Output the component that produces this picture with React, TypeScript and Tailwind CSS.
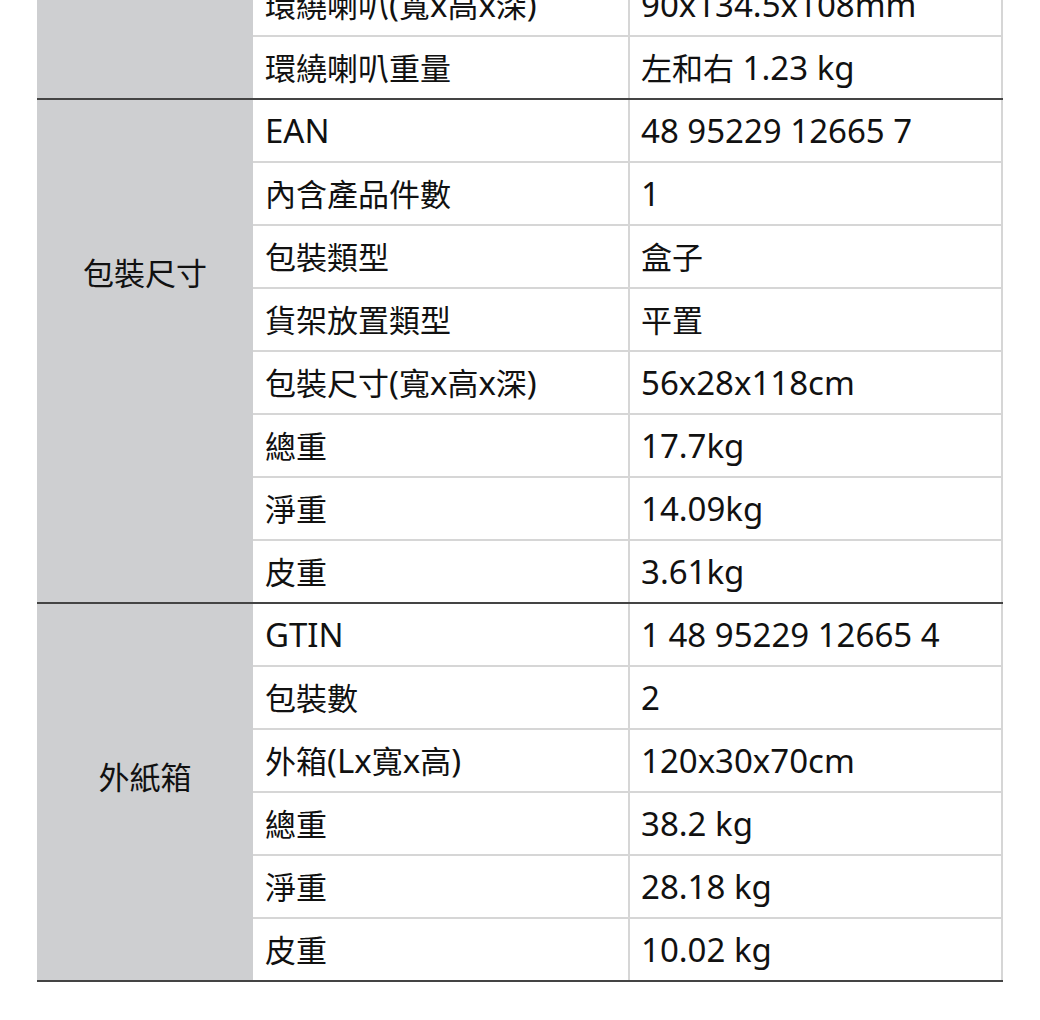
import React from 'react';

type Section = {
  label?: string;
  rows: [string, string][];
};

const sections: Section[] = [
  {
    rows: [
      ['環繞喇叭(寬x高x深)', '90x134.5x108mm'],
      ['環繞喇叭重量', '左和右 1.23 kg'],
    ],
  },
  {
    label: '包裝尺寸',
    rows: [
      ['EAN', '48 95229 12665 7'],
      ['內含產品件數', '1'],
      ['包裝類型', '盒子'],
      ['貨架放置類型', '平置'],
      ['包裝尺寸(寬x高x深)', '56x28x118cm'],
      ['總重', '17.7kg'],
      ['淨重', '14.09kg'],
      ['皮重', '3.61kg'],
    ],
  },
  {
    label: '外紙箱',
    rows: [
      ['GTIN', '1 48 95229 12665 4'],
      ['包裝數', '2'],
      ['外箱(Lx寬x高)', '120x30x70cm'],
      ['總重', '38.2 kg'],
      ['淨重', '28.18 kg'],
      ['皮重', '10.02 kg'],
    ],
  },
];

const font = { fontFamily: '"Noto Sans", "Noto Sans CJK TC", sans-serif' };

// CJK glyphs run a bit smaller than the latin ones in the original
const Txt = ({ text }: { text: string }) => (
  <span>
    {text.split(/([\u3000-\u9fff\uff00-\uffef]+)/).filter(Boolean).map((part, i) =>
      /[\u3000-\u9fff\uff00-\uffef]/.test(part) ? (
        <span key={i} className="text-[31px]">{part}</span>
      ) : (
        <span key={i} className="text-[33px]">{part}</span>
      )
    )}
  </span>
);

const App: React.FC = () => {
  return (
    <div className="w-[1040px] h-[1020px] overflow-hidden bg-white text-[#111] text-[32px]" style={font}>
      <div className="ml-[37px] w-[966px] -mt-[26px]">
        {sections.map((s, i) => (
          <div key={i} className="flex border-b-2 border-[#444]">
            <div className="w-[216px] shrink-0 bg-[#cecfd1] flex justify-center">
              {s.label && (
                <span className="leading-[46px] pt-[150px]">
                  <Txt text={s.label} />
                </span>
              )}
            </div>
            <div className="flex-1 flex flex-col">
              {s.rows.map(([k, v], j) => (
                <div
                  key={j}
                  className={`flex h-[61px] box-content ${j < s.rows.length - 1 ? 'border-b-2 border-[#d6d6d6]' : ''}`}
                >
                  <div className="w-[375px] shrink-0 flex items-center pl-[12px] whitespace-nowrap">
                    <Txt text={k} />
                  </div>
                  <div className="flex-1 flex items-center pl-[11px] border-l-2 border-r-2 border-[#d6d6d6] whitespace-nowrap">
                    <Txt text={v} />
                  </div>
                </div>
              ))}
            </div>
          </div>
        ))}
      </div>
    </div>
  );
};

export default App;
